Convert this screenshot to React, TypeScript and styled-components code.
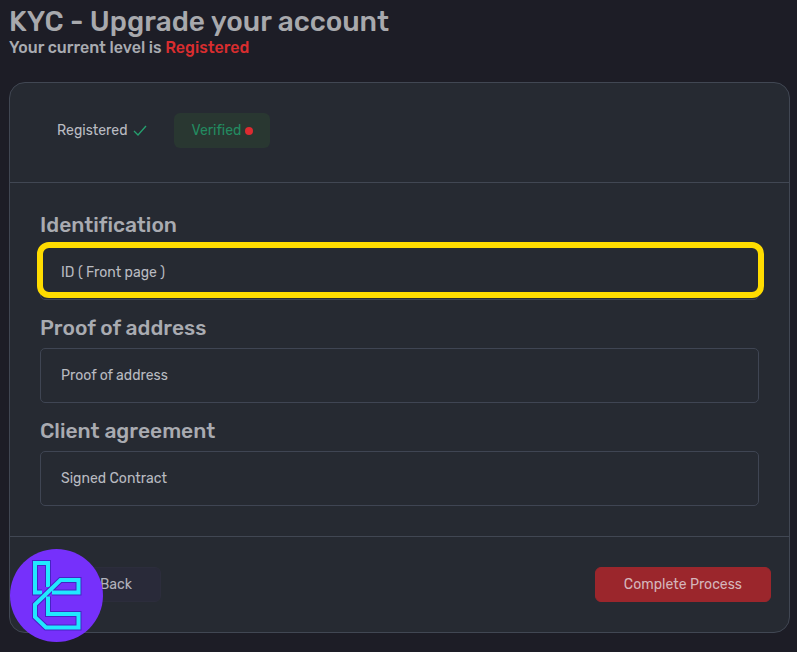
import React from 'react';
import styled, { createGlobalStyle } from 'styled-components';

const GlobalStyle = createGlobalStyle`
  *, *::before, *::after { box-sizing: border-box; }
  body {
    margin: 0;
    background: #1d1d26;
    color: #a9abb1;
    font-family: Rubik, Roboto, "Liberation Sans", sans-serif;
    font-size: 14px;
    line-height: 18px;
    font-variant-ligatures: none;
  }
  button { font: inherit; font-variant-ligatures: none; color: inherit; cursor: pointer; }
`;

const Page = styled.main`
  position: relative;
  min-height: 100vh;
  padding: 5px 7px 19px 9px;
`;

const Title = styled.h1`
  margin: 0;
  font-size: 28px;
  line-height: 34px;
  font-weight: 500;
  color: #a8a9ad;
`;

const Level = styled.p`
  margin: 0;
  font-size: 16px;
  font-weight: 500;
  line-height: 18px;
`;

const LevelName = styled.span`
  color: #d92d2f;
`;

const Card = styled.section`
  margin-top: 25px;
  border: 1px solid #414753;
  border-radius: 16px;
  background: #262a32;
`;

const Steps = styled.nav`
  display: flex;
  gap: 9px;
  padding: 30px 29px 34px;
  border-bottom: 1px solid #414753;
`;

const Step = styled.button<{ $active?: boolean }>`
  display: flex;
  align-items: center;
  gap: ${(p) => (p.$active ? 4 : 6)}px;
  height: 35px;
  padding: 0 ${(p) => (p.$active ? 17 : 18)}px;
  border: 0;
  border-radius: 6px;
  background: ${(p) => (p.$active ? '#293731' : 'transparent')};
  color: ${(p) => (p.$active ? '#238b60' : '#babcc2')};
`;

const Dot = styled.span`
  width: 8px;
  height: 8px;
  border-radius: 50%;
  background: #dc2b30;
`;

const Documents = styled.div`
  display: flex;
  flex-direction: column;
  gap: 16px;
  padding: 30px;
`;

const Group = styled.section`
  display: flex;
  flex-direction: column;
  gap: 8px;
`;

const GroupTitle = styled.h2`
  margin: 0;
  font-size: 21px;
  line-height: 24px;
  font-weight: 500;
`;

const Upload = styled.button<{ $highlighted?: boolean }>`
  position: relative;
  width: 100%;
  height: 55px;
  padding: 0 20px;
  border: 1px solid #3f4553;
  border-radius: 5px;
  background: transparent;
  color: #b9bbc1;
  text-align: left;

  &::after {
    content: '';
    display: ${(p) => (p.$highlighted ? 'block' : 'none')};
    position: absolute;
    inset: -4px -6px 1px -4px;
    border: 6px solid #ffdc00;
    border-radius: 12px;
    pointer-events: none;
  }
`;

const Footer = styled.footer`
  display: flex;
  justify-content: space-between;
  padding: 30px 18px 30px 61px;
  border-top: 1px solid #414753;
`;

const Action = styled.button<{ $primary?: boolean }>`
  height: 35px;
  padding: 0 28px;
  border: 1px solid ${(p) => (p.$primary ? '#9b262c' : '#2c2d3c')};
  border-radius: 6px;
  background: ${(p) => (p.$primary ? '#9b262c' : '#292a39')};
  color: ${(p) => (p.$primary ? '#d5b5bb' : '#b2b2bc')};
  font-weight: 400;
`;

const Logo = styled.svg`
  position: absolute;
  left: 10px;
  bottom: 10px;
  width: 93px;
  height: 93px;
`;

const upper = 'M32 43.5H25V14H38V38';
const arm = 'M42 43.5H68.5V31H50.5L25 55.5V68L36 78.5H68.5V65H38V47.5';

function CheckIcon() {
  return (
    <svg width="14" height="12" viewBox="0 0 14 12" fill="none" aria-hidden="true">
      <path d="M1 6L5 10L13 1" stroke="#25a06f" strokeWidth="1.3" />
    </svg>
  );
}

const documents = [
  { title: 'Identification', label: 'ID ( Front page )', highlighted: true },
  { title: 'Proof of address', label: 'Proof of address' },
  { title: 'Client agreement', label: 'Signed Contract' },
];

export default function App() {
  return (
    <>
      <GlobalStyle />
      <Page>
        <Title>KYC - Upgrade your account</Title>
        <Level>
          Your current level is <LevelName>Registered</LevelName>
        </Level>
        <Card>
          <Steps aria-label="Account levels">
            <Step type="button">
              Registered <CheckIcon />
            </Step>
            <Step type="button" $active aria-current="step">
              Verified <Dot />
            </Step>
          </Steps>
          <Documents>
            {documents.map((d) => (
              <Group key={d.title}>
                <GroupTitle>{d.title}</GroupTitle>
                <Upload type="button" $highlighted={d.highlighted}>
                  {d.label}
                </Upload>
              </Group>
            ))}
          </Documents>
          <Footer>
            <Action type="button">Back</Action>
            <Action type="button" $primary>
              Complete Process
            </Action>
          </Footer>
        </Card>
        <Logo viewBox="0 0 93 93" fill="none" aria-hidden="true">
          <circle cx="46.5" cy="46.5" r="46.5" fill="#7630fb" />
          <path d={upper} stroke="#4524c4" strokeWidth="6" />
          <path d={upper} stroke="#20e8ff" strokeWidth="4" />
          <path d={arm} stroke="#4524c4" strokeWidth="6" />
          <path d={arm} stroke="#20e8ff" strokeWidth="4" />
        </Logo>
      </Page>
    </>
  );
}
